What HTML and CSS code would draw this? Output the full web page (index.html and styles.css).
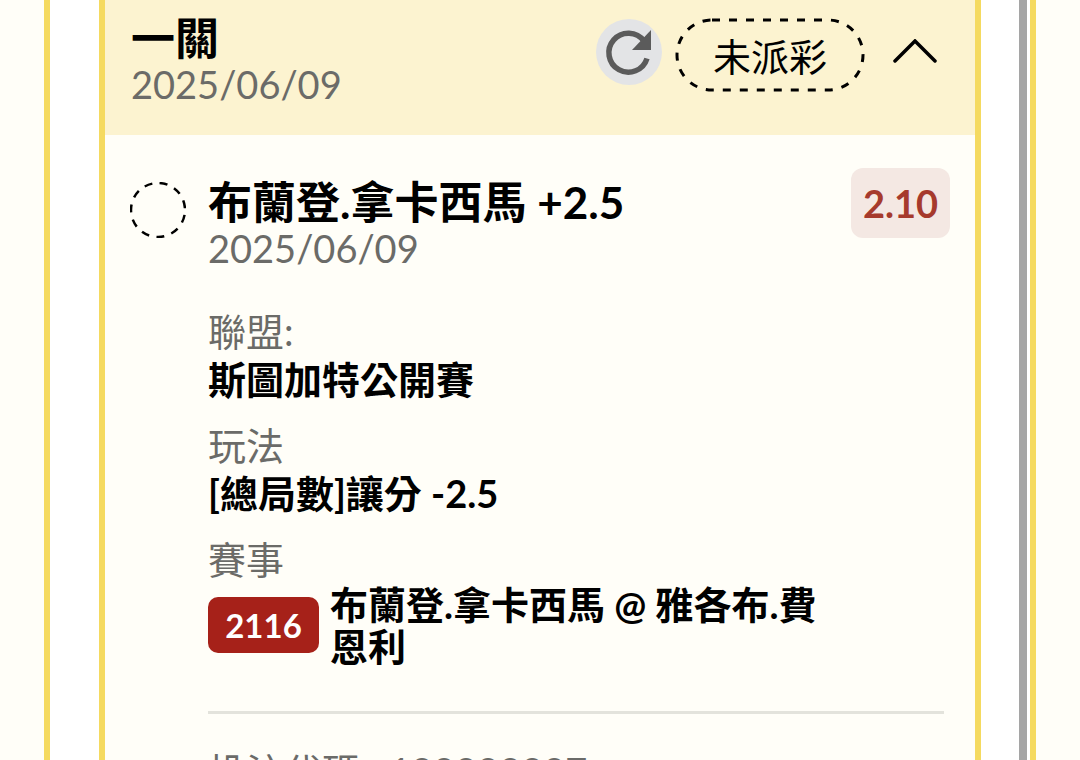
FILE: index.html
```html
<!DOCTYPE html>
<html lang="zh-Hant">
<head>
    <meta charset="UTF-8">
    <meta name="viewport" content="width=device-width, initial-scale=1.0">
    <title>注單紀錄</title>
    <link rel="stylesheet" href="styles.css">
</head>
<body>
    <main class="panel">
        <article class="ticket">
            <header class="ticket-header">
                <div class="heading">
                    <h1>一關</h1>
                    <time class="date" datetime="2025-06-09">2025/06/09</time>
                </div>
                <div class="actions">
                    <button class="refresh" type="button" aria-label="重新整理">
                        <svg viewBox="0 0 66 66" width="66" height="66">
                            <path d="M48 22A19.500 19.500 0 1 0 51 39.500" fill="none" stroke="#5b5b5b" stroke-width="5.500" />
                            <path d="M55 11V31H36Z" fill="#5b5b5b" />
                        </svg>
                    </button>
                    <span class="status">
                        <svg class="outline" width="100%" height="100%">
                            <rect class="dashes" x="2" y="2" rx="35" ry="35" />
                        </svg>
                        未派彩
                    </span>
                    <button class="toggle" type="button" aria-label="收合">
                        <svg viewBox="0 0 44 26" width="44" height="26">
                            <path d="M2 22L22 2L42 22" fill="none" stroke="#000" stroke-width="3.500" stroke-linecap="round" />
                        </svg>
                    </button>
                </div>
            </header>

            <section class="bet">
                <svg class="mark" viewBox="0 0 56 56" width="56" height="56">
                    <circle cx="28" cy="28" r="27" fill="none" stroke="#000" stroke-width="2.500" stroke-dasharray="8 7.420" stroke-dashoffset="-5" />
                </svg>
                <div class="details">
                    <div class="bet-top">
                        <div class="heading">
                            <h2>布蘭登.拿卡西馬 +2.5</h2>
                            <time class="date" datetime="2025-06-09">2025/06/09</time>
                        </div>
                        <span class="odds">2.10</span>
                    </div>

                    <dl>
                        <dt>聯盟:</dt>
                        <dd>斯圖加特公開賽</dd>
                        <dt>玩法</dt>
                        <dd>[總局數]讓分 -2.5</dd>
                        <dt>賽事</dt>
                        <dd class="match">
                            <span class="number">2116</span>
                            <span class="teams">布蘭登.拿卡西馬 @ 雅各布.費恩利</span>
                        </dd>
                    </dl>

                    <p class="code">投注代碼 : 100000007</p>
                </div>
            </section>
        </article>
        <div class="scrollbar"></div>
    </main>
</body>
</html>
```

FILE: styles.css
```css
* {
    box-sizing: border-box;
}
body {
    margin: 0;
    padding: 0 44px;
    height: 100vh;
    overflow: hidden;
    background: #fffef8;
    color: #000;
    font-family: Lato, "Noto Sans CJK TC", sans-serif;
    font-size: 38px;
}
h1, h2, p, dl, dd {
    margin: 0;
}
button {
    padding: 0;
    border: none;
    background: none;
    cursor: pointer;
}
svg {
    display: block;
}
.panel {
    display: flex;
    height: 100%;
    background: #fff;
    border: solid #f5da60;
    border-width: 0 6px;
}
.ticket {
    flex: 1;
    min-width: 0;
    margin: 0 38px 0 49px;
    background: #fffef8;
    border: solid #f5da60;
    border-width: 0 6px;
}
.scrollbar {
    width: 8px;
    margin-right: 3px;
    background: #a5a5a5;
}
.ticket-header {
    display: flex;
    justify-content: space-between;
    height: 135px;
    padding: 14px 38px 0 26px;
    background: #fcf3d0;
}
h1, h2 {
    font-size: 44px;
    font-weight: 700;
    line-height: 48px;
}
.date {
    display: block;
    font-size: 38px;
    line-height: 44px;
    color: #6b6b68;
}
.actions {
    display: flex;
    align-items: center;
    height: 76px;
}
.refresh {
    border-radius: 50%;
    background: #e3e4e6;
}
.status {
    position: relative;
    width: 190px;
    margin: 5px 28px 0 13px;
    padding-top: 2px;
    line-height: 72px;
    text-align: center;
}
.outline {
    position: absolute;
    inset: 0;
}
.dashes {
    width: calc(100% - 4px);
    height: calc(100% - 4px);
    fill: none;
    stroke: #000;
    stroke-width: 3;
    stroke-dasharray: 8 9;
}
.bet {
    display: flex;
    gap: 22px;
    padding: 33px 25px 0;
}
.mark {
    flex: none;
    margin-top: 14px;
}
.details {
    flex: 1;
    min-width: 0;
}
.bet-top {
    display: flex;
    justify-content: space-between;
    align-items: flex-start;
}
.bet-top .heading {
    padding-top: 10px;
}
.odds {
    width: 99px;
    border-radius: 12px;
    background: #f4e8e3;
    color: #a63a2d;
    font-size: 38px;
    font-weight: 700;
    line-height: 70px;
    text-align: center;
}
dl {
    margin: 37px 6px 0 0;
    padding-bottom: 44px;
    border-bottom: 3px solid #e3e3dc;
}
dt {
    line-height: 48px;
    color: #6b6b68;
}
dd {
    margin-bottom: 18px;
    font-weight: 700;
    line-height: 48px;
}
.match {
    display: flex;
    align-items: center;
    gap: 11px;
    margin: 0;
}
.number {
    width: 111px;
    border-radius: 10px;
    background: #a62119;
    color: #fff;
    font-size: 33px;
    line-height: 56px;
    text-align: center;
}
.teams {
    flex: 0 1 500px;
    line-height: 42px;
}
.code {
    margin-top: 33px;
    line-height: 48px;
    color: #6b6b68;
}
```
